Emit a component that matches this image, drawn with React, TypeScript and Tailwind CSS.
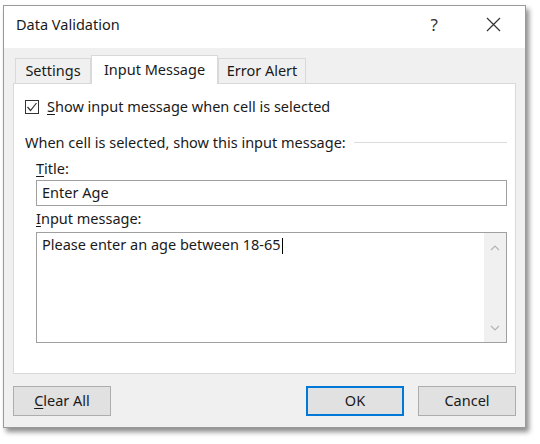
import React from "react";

const font = { fontFamily: '"Segoe UI", "Noto Sans", "Open Sans", sans-serif' };

function U({ children }: { children: React.ReactNode }) {
  return <span className="underline underline-offset-2">{children}</span>;
}

function Tab({ label, active, className }: { label: string; active?: boolean; className?: string }) {
  return (
    <div
      className={
        (active
          ? "relative z-10 -mb-px flex h-[29px] items-center justify-center border border-b-0 border-[#d9d9d9] bg-white"
          : "mt-[3px] flex h-[25px] items-center justify-center border border-b-0 border-[#d9d9d9] bg-[#f0f0f0]") +
        " " +
        (className ?? "")
      }
    >
      {label}
    </div>
  );
}

function Button({ children, primary, className }: { children: React.ReactNode; primary?: boolean; className?: string }) {
  return (
    <div
      className={
        "flex h-[30px] w-[98px] items-center justify-center bg-[#e1e1e1] " +
        (primary ? "border-2 border-[#0078d7]" : "border border-[#adadad]") +
        " " +
        (className ?? "")
      }
    >
      {children}
    </div>
  );
}

export default function App() {
  return (
    <div className="h-[444px] w-[540px] bg-white pl-[3px] pt-[5px] text-[14.5px] text-[#1a1a1a]" style={font}>
      <div className="flex h-[423px] w-[523px] flex-col border border-[#9a9a9a] bg-[#f0f0f0] shadow-[3px_4px_5px_rgba(0,0,0,0.45)]">
        {/* title bar */}
        <div className="flex h-[42px] items-center bg-white pb-[5px] pl-[12px] pr-[24px]">
          <span className="flex-1 text-[14.5px]">Data Validation</span>
          <span className="mr-[48px] text-[17px] text-[#333]">?</span>
          <svg width="15" height="15" viewBox="0 0 15 15" className="text-[#333]">
            <path d="M1 1 L14 14 M14 1 L1 14" stroke="currentColor" strokeWidth="1.2" />
          </svg>
        </div>

        {/* tabs */}
        <div className="flex pl-[11px] pt-[7px]">
          <Tab label="Settings" className="w-[76px]" />
          <Tab label="Input Message" active className="w-[127px]" />
          <Tab label="Error Alert" className="w-[88px]" />
        </div>

        {/* panel */}
        <div className="mx-[9px] flex h-[291px] flex-col border border-[#d9d9d9] bg-white pl-[11px] pr-[8px]">
          <div className="mt-[12px] flex items-center gap-[8px]">
            <div className="flex h-[14px] w-[14px] items-center justify-center border border-[#333]">
              <svg width="12" height="12" viewBox="0 0 12 12">
                <path d="M1.5 6 L4.5 9.5 L10.5 2" fill="none" stroke="#333" strokeWidth="1.2" />
              </svg>
            </div>
            <span>
              <U>S</U>how input message when cell is selected
            </span>
          </div>

          <div className="mt-[14px] flex items-center gap-[8px]">
            <span>When cell is selected, show this input message:</span>
            <div className="h-px flex-1 bg-[#dcdcdc]" />
          </div>

          <div className="ml-[11px] flex flex-col">
            <div className="mt-[4px]">
              <U>T</U>itle:
            </div>
            <div className="mt-[1px] flex h-[26px] items-center border border-[#a0a0a0] pl-[5px]">Enter Age</div>

            <div className="mt-[2px]">
              <U>I</U>nput message:
            </div>
            <div className="mt-[2px] flex h-[111px] border border-[#a0a0a0]">
              <div className="flex-1 pl-[5px] pt-[1px]">
                Please enter an age between 18-65<span className="ml-px inline-block h-[16px] w-px bg-black align-middle" />
              </div>
              <div className="flex w-[22px] flex-col items-center justify-between bg-[#f0f0f0] pb-[11px] pt-[12px]">
                <svg width="10" height="6" viewBox="0 0 10 6">
                  <path d="M1 5 L5 1 L9 5" fill="none" stroke="#b5b5b5" strokeWidth="1.2" />
                </svg>
                <svg width="10" height="6" viewBox="0 0 10 6">
                  <path d="M1 1 L5 5 L9 1" fill="none" stroke="#b5b5b5" strokeWidth="1.2" />
                </svg>
              </div>
            </div>
          </div>
        </div>

        {/* buttons */}
        <div className="mt-[12px] flex px-[9px]">
          <Button>
            <span>
              <U>C</U>lear All
            </span>
          </Button>
          <div className="flex-1" />
          <Button primary>OK</Button>
          <Button className="ml-[14px]">Cancel</Button>
        </div>
      </div>
    </div>
  );
}
